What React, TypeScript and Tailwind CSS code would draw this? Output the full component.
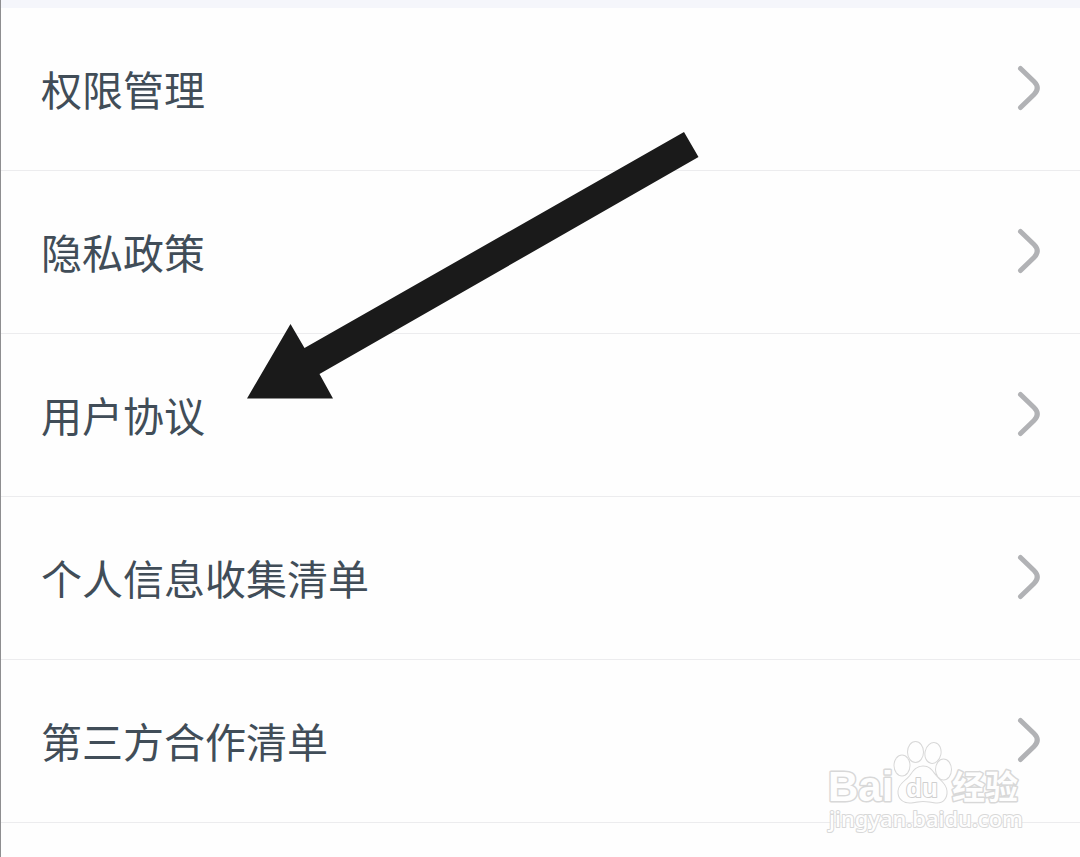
const items = [
  { label: '权限管理', href: '#permissions' },
  { label: '隐私政策', href: '#privacy' },
  { label: '用户协议', href: '#agreement' },
  { label: '个人信息收集清单', href: '#personal-info' },
  { label: '第三方合作清单', href: '#third-party' },
]

function Chevron() {
  return (
    <svg className="w-6 h-12 shrink-0" viewBox="0 0 24 48" fill="none" aria-hidden="true">
      <path
        d="M4.5 4.5 L18 17.5 Q24.5 24 18 30.5 L4.5 43.5"
        stroke="#b1b2b5"
        strokeWidth="5"
        strokeLinecap="round"
      />
    </svg>
  )
}

// Arrow pointing at the user agreement row
function PointerArrow() {
  return (
    <svg
      className="absolute left-[239px] top-[120px] w-[470px] h-[290px] pointer-events-none"
      viewBox="240 120 470 290"
      aria-hidden="true"
    >
      <polygon points="247,398.5 290.5,324 304.5,348 684,132 698.5,157 319.5,374 333,398.5" fill="#1a1a1a" />
    </svg>
  )
}

function Watermark() {
  return (
    <svg
      className="absolute right-[50px] top-[730px] w-[210px] h-[110px] pointer-events-none"
      viewBox="0 0 210 110"
      fill="#fefefe"
      stroke="#d8d8d8"
      strokeLinejoin="round"
      paintOrder="stroke"
    >
      <g className="font-['Liberation_Sans','Noto_Sans_CJK_SC',sans-serif] font-bold" strokeWidth="3">
        <text x="8" y="71" fontSize="42">Bai</text>
        <text x="132" y="69" fontSize="33">经验</text>
      </g>
      <text
        x="9"
        y="97"
        fontSize="22"
        className="font-['Noto_Sans',sans-serif] font-medium"
        strokeWidth="2"
      >
        jingyan.baidu.com
      </text>
      {/* Paw */}
      <g strokeWidth="2">
        <ellipse cx="82" cy="35.5" rx="7.5" ry="10" />
        <ellipse cx="95.5" cy="22" rx="7.5" ry="10" />
        <ellipse cx="113" cy="23" rx="7.5" ry="10" transform="rotate(12 113 23)" />
        <ellipse cx="123.5" cy="39.5" rx="7.5" ry="10" />
        <path d="M103 36.5 C96 36.5 93 42 90 46 C86 51 79 54 78.5 61 C78 69 84 73 91 72.5 C96 72 99 71 103 71 C108 71 111 72 116 72.5 C123 73 127 68 126.5 61 C126 54 120 51 116 46 C112 41 110 36.5 103 36.5 Z" />
      </g>
      <text
        x="86"
        y="67"
        fontSize="26"
        className="font-['Liberation_Sans',sans-serif] font-bold"
        stroke="#cfcfcf"
        strokeWidth="2"
      >
        du
      </text>
    </svg>
  )
}

export default function App() {
  return (
    <main className="relative min-h-screen bg-[#fefefe] border-l border-[#8e8e90] overflow-hidden font-['Noto_Sans_CJK_SC',sans-serif]">
      <div className="h-2 bg-[#f5f6fb]" />
      <nav>
        <ul>
          {items.map((item) => (
            <li key={item.href} className="border-b border-[#ececee]">
              <a
                href={item.href}
                className="flex items-center justify-between pt-[50px] pb-[52px] pl-10 pr-10 text-[41px] leading-[60px] text-[#414d58]"
              >
                <span>{item.label}</span>
                <Chevron />
              </a>
            </li>
          ))}
        </ul>
      </nav>
      <PointerArrow />
      <Watermark />
    </main>
  )
}
